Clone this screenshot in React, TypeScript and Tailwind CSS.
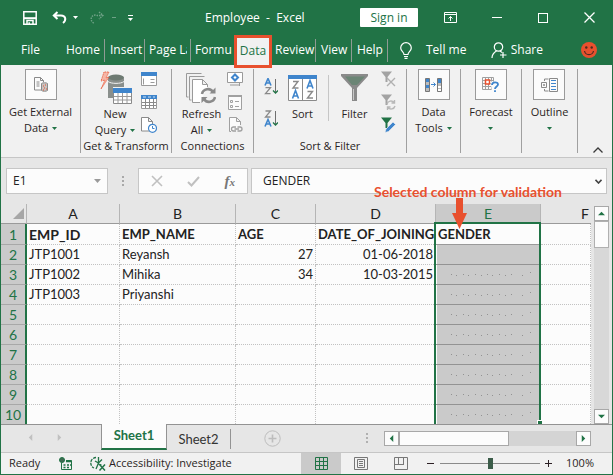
import type { ReactNode } from 'react';

const gridFont = "font-['Lato','Liberation_Sans',sans-serif]";

function Caret({ className = '' }: { className?: string }) {
  return (
    <svg viewBox="0 0 5 3" className={`inline-block h-[3px] w-[5px] ${className}`} aria-hidden="true">
      <path d="M0 0h5L2.5 3z" fill="currentColor" />
    </svg>
  );
}

/* ---------- title bar ---------- */

function TitleBar() {
  return (
    <header className="flex h-[35px] items-center text-white">
      <button aria-label="Save" className="ml-[21px]">
        <svg viewBox="0 0 16 16" className="size-4" fill="none" stroke="currentColor" strokeWidth="1.5">
          <path d="M1.8 1.8h12.4v12.4H1.8z" />
          <path d="M2 8.2h12" strokeWidth="2" />
          <path d="M5 14v-3.5h6V14M7.2 12.3v1.7" />
        </svg>
      </button>
      <button aria-label="Undo" className="ml-3.5 flex items-center gap-1.5">
        <svg viewBox="0 0 15 13" className="h-[13px] w-[15px]" fill="none" stroke="currentColor" strokeWidth="2">
          <path d="M5.500 1 1.800 4.500l3.700 3.500M2 4.500h7c5 0 5.500 5 2 7.500" />
        </svg>
        <Caret />
      </button>
      <button aria-label="Redo" disabled className="ml-3 flex items-center gap-2 text-[#6fa287]">
        <svg viewBox="0 0 14 13" className="h-[13px] w-3.5" fill="none" stroke="currentColor" strokeWidth="1.4" strokeDasharray="1.5 1">
          <path d="M9 1l4 3.5L9 8M13 4.500H7a4 4 0 0 0-5 6l2 2" />
        </svg>
        <span className="h-px w-1 bg-current" />
      </button>
      <button aria-label="Customize quick access" className="ml-3 flex flex-col items-center gap-[2px]">
        <span className="h-px w-[5px] bg-white" />
        <Caret />
      </button>
      <h1 className="ml-[72px] whitespace-pre text-[12px]">Employee  -  Excel</h1>
      <button className="ml-auto h-[19px] w-[58px] rounded-[1px] bg-white text-[12px] leading-[18px] text-[#217346]">Sign in</button>
      <button aria-label="Ribbon display options" className="ml-[26px]">
        <svg viewBox="0 0 13 11" className="h-[11px] w-[13px]" fill="none" stroke="currentColor">
          <path d="M.5.5h12v10H.5zM.5 2.500h12M6.500 9V4.500M4.500 6.500l2-2 2 2" />
        </svg>
      </button>
      <button aria-label="Minimize" className="ml-[35px] flex h-4 w-2.5 items-center">
        <span className="h-px w-full bg-white" />
      </button>
      <button aria-label="Maximize" className="ml-9 size-2.5 border border-white" />
      <button aria-label="Close" className="mr-[17px] ml-9">
        <svg viewBox="0 0 11 11" className="size-[11px]" stroke="currentColor" strokeWidth="1.3">
          <path d="M.5.5l10 10M10.500.5l-10 10" />
        </svg>
      </button>
    </header>
  );
}

/* ---------- ribbon tabs ---------- */

function Tab({ label, width, line = true }: { label: string; width: string; line?: boolean }) {
  return (
    <button className={`h-[23px] shrink-0 pl-[5px] text-left whitespace-nowrap ${width} ${line ? 'border-r border-[#8f9b94]' : ''}`}>
      {label}
    </button>
  );
}

function RibbonTabs() {
  return (
    <nav className="flex h-[30px] items-center text-[12px] text-white">
      <button className="ml-[20px] w-10 text-left">File</button>
      <Tab label="Home" width="w-[44px]" />
      <Tab label="Insert" width="w-[40px]" />
      <div className="flex w-[46px] border-r border-[#8f9b94]">
        <button className="ml-1 h-[23px] w-[38px] overflow-hidden text-left whitespace-nowrap">Page La</button>
      </div>
      <button className="h-[23px] w-[43px] shrink-0 pl-1 text-left">Formu</button>
      <button className="z-10 h-[33px] w-[38px] shrink-0 translate-y-px border-[3px] border-[#e8502e] bg-[#f1f1f1] text-[#217346]">Data</button>
      <div className="-ml-[2px] flex">
        <Tab label="Review" width="w-[46px]" />
        <Tab label="View" width="w-[36px]" />
        <Tab label="Help" width="w-[36px]" />
      </div>
      <button className="ml-3 flex items-center gap-3.5">
        <svg viewBox="0 0 12 17" className="h-[17px] w-3" fill="none" stroke="currentColor" strokeWidth="1.2">
          <path d="M4 12.500c0-2.500-3.300-3.300-3.300-6.500a5.300 5.300 0 0 1 10.600 0c0 3.200-3.300 4-3.300 6.500zM4 14.500h4M4.500 16.400h3" />
        </svg>
        Tell me
      </button>
      <button className="ml-auto flex items-center gap-1">
        <svg viewBox="0 0 16 17" className="h-[17px] w-4" fill="none" stroke="currentColor" strokeWidth="1.2">
          <circle cx="7.500" cy="5" r="4.200" />
          <path d="M1 16c0-3.500 2-5.500 4.500-7M9 9l2 1.500M12 10v6M9 13h6.500" />
        </svg>
        Share
      </button>
      <button aria-label="Feedback" className="mr-[15px] ml-[38px]">
        <svg viewBox="0 0 16 16" className="size-4">
          <circle cx="8" cy="8" r="8" fill="#e8502e" />
          <circle cx="5.300" cy="5.500" r="1.200" fill="#4b2a20" />
          <circle cx="10.700" cy="5.500" r="1.200" fill="#4b2a20" />
          <path d="M3.500 9a4.600 4.600 0 0 0 9 0" fill="none" stroke="#4b2a20" strokeWidth="1.200" />
        </svg>
      </button>
    </nav>
  );
}

/* ---------- ribbon ---------- */

function Group({ width, label, children }: { width: string; label?: string; children: ReactNode }) {
  return (
    <section className={`flex h-[84px] shrink-0 flex-col border-r border-[#a0a0a0] ${width}`}>
      <div className="flex flex-1 justify-center">{children}</div>
      {label && <h2 className="text-center text-[11px] leading-[14px] whitespace-nowrap">{label}</h2>}
    </section>
  );
}

function BoxedCommand({ lines, icon }: { lines: [string, string]; icon: ReactNode }) {
  return (
    <button className="flex flex-col items-center text-[11px] leading-4 whitespace-nowrap">
      <span className="mb-1 flex h-[31px] w-8 items-center justify-center border border-[#9a9a9a] bg-[#fbfbfb]">{icon}</span>
      <span>{lines[0]}</span>
      <span className="flex h-4 items-center gap-1">
        {lines[1]}
        <Caret className="text-[#217346]" />
      </span>
    </button>
  );
}

function TallCommand({ lines, icon, caret }: { lines: string[]; icon: ReactNode; caret?: boolean }) {
  return (
    <button className="flex flex-col items-center text-[11px] leading-4 whitespace-nowrap">
      <span className="flex h-[37px] items-center">{icon}</span>
      <span>{lines[0]}</span>
      <span className="flex items-center gap-1">
        {lines[1]}
        {caret && <Caret className="text-[#217346]" />}
      </span>
    </button>
  );
}

function ExternalDataIcon() {
  return (
    <svg viewBox="0 0 14 15" className="h-[15px] w-3.5" fill="none" stroke="#8a8a8a">
      <path d="M7 13H.5V.5h6l3 3V5M6.500.5v3h3M2.500 5h3M2.500 7h3M2.500 9h3" />
      <path d="M7.500 6.500v7c1 1 5 1 6 0v-7c-1-1-5-1-6 0z" fill="#c9c3c0" />
      <path d="M9 9h1M11 8h1M10 11h1M12 12h1M9 13h1" stroke="#e8502e" />
    </svg>
  );
}

function NewQueryIcon() {
  return (
    <svg viewBox="0 0 33 33" className="size-[33px]">
      <path d="M9 8c0-5 16-5 16 0v8H14v11H9z" fill="#8a8f8c" />
      <ellipse cx="17" cy="6.500" rx="8" ry="3" fill="#6d7a72" />
      <path d="M9 10.500c3 2.500 13 2.500 16 0" stroke="#f1f1f1" fill="none" />
      <path d="M5 1 2 10l4-1-4 9 8-12-3 1 3-6z" fill="#f6b5a6" stroke="#e8502e" strokeWidth=".8" strokeDasharray="1.5 .8" />
      <path d="M14.500 17.500h18v15h-18z" fill="#fff" stroke="#8a8a8a" />
      <path d="M14 17h19v5H14z" fill="#3f85cc" />
      <path d="M15 25.500h17M15 29h17M19 22v10M23.500 22v10M28 22v10" stroke="#9a9a9a" />
    </svg>
  );
}

function TableIcon({ dense = false }: { dense?: boolean }) {
  return (
    <svg viewBox="0 0 16 16" className="size-4">
      <path d="M.5 1.500h15v13H.5z" fill="#fff" stroke="#9a9a9a" />
      <path d="M0 1h16v4H0z" fill="#3f85cc" />
      {dense ? (
        <path d="M1 8.500h14M1 11.500h14M4.500 5v9M8.500 5v9M12.500 5v9" stroke="#8a8a8a" />
      ) : (
        <path d="M9.500 8.500h4M9.500 11.500h4M2.500 7.500v6" stroke="#9a9a9a" />
      )}
      {dense && <path d="M2 3h3M7 3h3M12 3h2" stroke="#cfe2f5" />}
    </svg>
  );
}

function RecentIcon() {
  return (
    <svg viewBox="0 0 16 16" className="size-4" fill="#fff">
      <path d="M9.500 14H.5V.5h7l4 4V7M7.500.5v4h4" stroke="#8a8a8a" />
      <circle cx="11.500" cy="11.300" r="4" stroke="#3f85cc" strokeWidth="1.200" />
      <path d="M11.500 9v2.500h2" stroke="#3f85cc" fill="none" />
    </svg>
  );
}

function RefreshIcon() {
  return (
    <svg viewBox="0 0 30 32" className="h-8 w-[30px]" fill="none" stroke="#9a9a9a">
      <path d="M2.500 25H.5V1.500h15M5.500 28h-2V4.500h15" />
      <path d="M14 30.500H6.500v-23h10l5 5V15M16.500 7.500v5h5" fill="#fff" />
      <path d="M16 22a6 6 0 0 1 11-2M29 25a6 6 0 0 1-11 2" strokeWidth="2.600" stroke="#8a8a8a" />
      <path d="M29.500 15.500v6h-6zM15.500 31v-6h6z" fill="#8a8a8a" stroke="none" />
    </svg>
  );
}

function ConnectionsIcon() {
  return (
    <svg viewBox="0 0 16 16" className="size-4" fill="none" stroke="#9a9a9a">
      <path d="M.5 1.500h15v10H.5zM3 14h10M12.500 12v3" fill="#fff" />
      <path d="M8 3.500 11 6.500l-3 3-3-3z" stroke="#3f85cc" strokeWidth="2" />
    </svg>
  );
}

function PropertiesIcon() {
  return (
    <svg viewBox="0 0 16 16" className="size-4" fill="none" stroke="#a0a0a0">
      <path d="M1.500 1.500h13v14h-13z" fill="#fbfbfb" />
      <path d="M1 2h14" strokeWidth="2" />
      <path d="M3.500 6.500h2v2h-2zM3.500 11.500h2v2h-2zM8 7.500h4M8 12.500h4" />
    </svg>
  );
}

function LinksIcon() {
  return (
    <svg viewBox="0 0 16 16" className="size-4" fill="none" stroke="#a0a0a0">
      <path d="M4 14.500H2.500V.5h7l4 4V8M9.500.5v4h4" fill="#fbfbfb" />
      <path d="M9 10H6.500a2 2 0 0 0 0 4H9M10.500 10H13a2 2 0 0 1 0 4h-2.500M7.500 12h4.500" strokeWidth="1.300" />
    </svg>
  );
}

function SortArrowIcon({ descending = false }: { descending?: boolean }) {
  const top = 'M1 7.500 4 .5l3 7M2 5h4';
  return (
    <svg viewBox="0 0 14 17" className="h-[17px] w-3.5" fill="none" strokeWidth="1.300">
      {descending ? (
        <>
          <path d="M1.500 1h5l-5 6h5" stroke="#8a8a8a" />
          <path d={top} transform="translate(0 9)" stroke="#3f85cc" strokeWidth="1.600" />
        </>
      ) : (
        <>
          <path d={top} stroke="#3f85cc" strokeWidth="1.600" />
          <path d="M1.500 9.700h5l-5 6h5" stroke="#8a8a8a" />
        </>
      )}
      <path d="M11.500 1v14" stroke="#6f6f6f" strokeWidth="1" />
      <path d="M9 12.500l2.500 2.500 2.500-2.500" stroke="#217346" />
    </svg>
  );
}

function SortIcon() {
  return (
    <svg viewBox="0 0 29 26" className="h-[26px] w-[29px]" fill="none">
      <path d="M.5.5h28v25H.5z" fill="#fff" stroke="#8a8a8a" />
      <path d="M0 0h29v4H0z" fill="#3f85cc" />
      <path d="M14.500 4v21" stroke="#8a8a8a" />
      <path d="M5 6.500h5l-5 6.500h5.500M19.500 16.500h5l-5 6.500H25" stroke="#8a8a8a" strokeWidth="1.400" />
      <path d="M4.500 23.500 7.500 15.500l3 8M5.500 21h4M19 13.500 22 5.500l3 8M20 11h4" stroke="#3f85cc" strokeWidth="1.600" />
    </svg>
  );
}

function FilterIcon() {
  return (
    <svg viewBox="0 0 27 28" className="h-7 w-[27px]">
      <path d="M0 0h27v2L16 14v13h-5V14L0 2z" fill="#8a8a8a" />
      <path d="M4 2.500h20l-8 8.500h-5z" fill="#6b8575" />
      <path d="M12.500 15v11" stroke="#c9c9c9" />
    </svg>
  );
}

function SmallFilter({ kind }: { kind: 'clear' | 'reapply' | 'advanced' }) {
  const color = kind === 'advanced' ? '#217346' : '#a3a3a3';
  return (
    <svg viewBox="0 0 16 16" className="size-4" fill="none">
      <path d="M1 .5h11L7.500 6v5h-2V6z" fill={color} />
      {kind === 'clear' && <path d="M7 7l8 8M15 7l-8 8" stroke="#b0b0b0" strokeWidth="1.400" />}
      {kind === 'reapply' && (
        <path d="M7 10a4 4 0 0 1 7-1.500M15 12a4 4 0 0 1-7 1.500M14.500 6v3h-3M7.500 16v-3h3" stroke="#b8b8b8" strokeWidth="1.400" />
      )}
      {kind === 'advanced' && <path d="M5 15.500l1-3.500 7-7 2.500 2.500-7 7z" fill="#3f85cc" stroke="#f1f1f1" strokeWidth=".6" />}
    </svg>
  );
}

function DataToolsIcon() {
  return (
    <svg viewBox="0 0 17 14" className="h-3.5 w-[17px]">
      <path d="M.5.5h4v13h-4zM12.500.5h4v13h-4z" fill="#bcbcbc" stroke="#777" />
      <path d="M1 1h3v3H1zM1 7h3v3H1zM13 1h3v4h-3z" fill="#3f85cc" />
      <path d="M13 8h3v2h-3zM13 11h3v2h-3z" fill="#fff" />
      <path d="M6 6.500h4.500M8.500 4.500l2 2-2 2" stroke="#3f85cc" fill="none" />
    </svg>
  );
}

function ForecastIcon() {
  return (
    <svg viewBox="0 0 17 15" className="h-[15px] w-[17px]" fill="none">
      <path d="M.5.5h11v12H.5zM3.500 0v13M6.500 0v13M9.500 0v13M0 3.500h12M0 6.500h12M0 9.500h12" stroke="#a0a0a0" />
      <path d="M3.500 3h4v4h-4z" fill="#fff" stroke="#e8502e" strokeWidth="1.500" />
      <path d="M8.500 4.500H17V15H10z" fill="#fbfbfb" />
      <path d="M10 8c0-3.500 6-3.500 6-.5 0 2-3 2-3 4.500M13 13.200v1.800" stroke="#3f85cc" strokeWidth="1.800" />
    </svg>
  );
}

function OutlineIcon() {
  return (
    <svg viewBox="0 0 17 14" className="h-3.5 w-[17px]" fill="none" stroke="#8a8a8a">
      <path d="M8.500.5h8v13h-8z" />
      <path d="M10 2.500h5M10 5.500h5M10 8.500h5M10 11.500h5" stroke="#3f85cc" />
      <path d="M.5 4.500h5v5h-5zM2 7h2M3 6v2M3.500 1h4M3.500 13h4M3.500 1v2M3.500 11v2" />
    </svg>
  );
}

function IconStack({ items }: { items: [string, ReactNode][] }) {
  return (
    <div className="flex flex-col gap-[7px] pt-[2px]">
      {items.map(([label, icon]) => (
        <button key={label} aria-label={label}>{icon}</button>
      ))}
    </div>
  );
}

function Ribbon() {
  return (
    <div className="flex h-[93px] items-start border-b border-[#c6c6c6] bg-[#f1f1f1] pt-[4px] text-[#2b1f24]">
      <Group width="w-[80px]">
        <BoxedCommand lines={['Get External', 'Data']} icon={<ExternalDataIcon />} />
      </Group>
      <Group width="w-[91px]" label="Get & Transform">
        <div className="flex gap-1.5">
          <TallCommand lines={['New', 'Query']} icon={<NewQueryIcon />} caret />
          <IconStack
            items={[
              ['Show queries', <TableIcon />],
              ['From table', <TableIcon dense />],
              ['Recent sources', <RecentIcon />],
            ]}
          />
        </div>
      </Group>
      <Group width="w-[82px]" label="Connections">
        <div className="flex gap-1.5">
          <TallCommand lines={['Refresh', 'All']} icon={<RefreshIcon />} caret />
          <IconStack
            items={[
              ['Connections', <ConnectionsIcon />],
              ['Properties', <PropertiesIcon />],
              ['Edit links', <LinksIcon />],
            ]}
          />
        </div>
      </Group>
      <Group width="w-[153px]" label="Sort & Filter">
        <div className="flex">
          <div className="flex flex-col gap-[15px] pt-[9px]">
            <button aria-label="Sort A to Z"><SortArrowIcon /></button>
            <button aria-label="Sort Z to A"><SortArrowIcon descending /></button>
          </div>
          <div className="ml-[10px]">
            <TallCommand lines={['Sort']} icon={<SortIcon />} />
          </div>
          <span className="mt-1.5 ml-[11px] h-[46px] w-px bg-[#c6c6c6]" />
          <div className="mr-[12px] ml-[12px]">
            <TallCommand lines={['Filter']} icon={<FilterIcon />} />
          </div>
          <IconStack
            items={[
              ['Clear filter', <SmallFilter kind="clear" />],
              ['Reapply filter', <SmallFilter kind="reapply" />],
              ['Advanced filter', <SmallFilter kind="advanced" />],
            ]}
          />
        </div>
      </Group>
      <Group width="w-[54px]">
        <BoxedCommand lines={['Data', 'Tools']} icon={<DataToolsIcon />} />
      </Group>
      <Group width="w-[61px]">
        <BoxedCommand lines={['Forecast', '']} icon={<ForecastIcon />} />
      </Group>
      <Group width="w-[56px]">
        <BoxedCommand lines={['Outline', '']} icon={<OutlineIcon />} />
      </Group>
      <button aria-label="Collapse ribbon" className="mr-[9px] mb-1 ml-auto self-end">
        <svg viewBox="0 0 10 6" className="h-1.5 w-2.5" fill="none" stroke="#3a3a3a" strokeWidth="1.300">
          <path d="M.5 5.500 5 1l4.500 4.500" />
        </svg>
      </button>
    </div>
  );
}

/* ---------- formula bar ---------- */

function FormulaBar() {
  return (
    <div className="flex h-[46px] items-center px-[5px] text-[#222]">
      <div className="flex h-[26px] w-[102px] items-center border border-[#c6c6c6] bg-[#fcfcfc] pr-1.5">
        <input aria-label="Name box" defaultValue="E1" className="w-full min-w-0 pl-1.5 text-[12px] outline-none" />
        <button aria-label="Names"><svg viewBox="0 0 7 4" className="h-1 w-[7px]"><path d="M0 0h7L3.500 4z" fill="#9a9a9a" /></svg></button>
      </div>
      <span className="mx-3.5 flex w-[2px] flex-col gap-[2px]">
        <i className="size-[2px] bg-[#a8a8a8]" />
        <i className="size-[2px] bg-[#a8a8a8]" />
        <i className="size-[2px] bg-[#a8a8a8]" />
      </span>
      <div className="flex h-[26px] w-[110px] shrink-0 items-center justify-between border border-[#c6c6c6] bg-[#fcfcfc] pr-3 pl-3">
        <button aria-label="Cancel">
          <svg viewBox="0 0 12 12" className="size-3" stroke="#c0c0c0" strokeWidth="1.600"><path d="M1 1l10 10M11 1 1 11" /></svg>
        </button>
        <button aria-label="Enter">
          <svg viewBox="0 0 13 11" className="h-[11px] w-[13px]" fill="none" stroke="#c0c0c0" strokeWidth="2"><path d="M1 6l3.500 3.500L12 1" /></svg>
        </button>
        <button aria-label="Insert function" className="font-['Liberation_Serif',serif] text-[15px] leading-5 font-bold text-[#777] italic">
          f<span className="text-[11px]">x</span>
        </button>
      </div>
      <div className="ml-[3px] flex h-[26px] min-w-0 flex-1 items-center border border-[#c6c6c6] bg-[#fcfcfc] pr-1">
        <input aria-label="Formula" defaultValue="GENDER" className="min-w-0 flex-1 pl-[11px] text-[12px] outline-none" />
        <button aria-label="Expand formula bar">
          <svg viewBox="0 0 7 5" className="h-[5px] w-[7px]" fill="none" stroke="#444" strokeWidth="1.600"><path d="M.5.8 3.500 4l3-3.200" /></svg>
        </button>
      </div>
    </div>
  );
}

/* ---------- sheet ---------- */

const rows: string[][] = [
  ['EMP_ID', 'EMP_NAME', 'AGE', 'DATE_OF_JOINING', 'GENDER'],
  ['JTP1001', 'Reyansh', '27', '01-06-2018', ''],
  ['JTP1002', 'Mihika', '34', '10-03-2015', ''],
  ['JTP1003', 'Priyanshi', '', '', ''],
  ...Array.from({ length: 6 }, () => ['', '', '', '', '']),
];

const dotColumns = [15, 20, 27, 32, 39, 45, 51, 56, 63, 69, 75, 86, 94];

function SelectedFill({ dots }: { dots: boolean }) {
  return (
    <svg className="block h-[19px] w-full" aria-hidden="true">
      {dots && dotColumns.map((x, i) => <rect key={x} x={x} y={i === 12 ? 7 : i % 2 ? 10 : 9} width="1" height="1" fill="#929292" />)}
    </svg>
  );
}

function Annotation() {
  return (
    <>
      <span className="absolute -top-[21px] -left-[62px] z-20 text-[14px] leading-[18px] font-bold whitespace-nowrap text-[#e8502e]">
        Selected column for validation
      </span>
      <svg viewBox="0 0 15 31" className="absolute -top-1.5 left-4 z-20 h-[31px] w-[15px]" aria-hidden="true">
        <path d="M4 0h7v15h4L7.500 31 0 15h4z" fill="#e8502e" />
      </svg>
    </>
  );
}

function Sheet() {
  const line = 'border-r border-dotted border-[#c2c2c2]';
  const head = 'border-r border-b border-r-[#b5b5b5] border-b-[#9a9a9a] p-0 font-normal';
  return (
    <table className={`w-full table-fixed border-separate border-spacing-0 text-[#222] ${gridFont}`}>
      <colgroup>
        <col className="w-[26px]" />
        <col className="w-[93px]" />
        <col className="w-[116px]" />
        <col className="w-[80px]" />
        <col className="w-[120px]" />
        <col className="w-[105px]" />
        <col />
      </colgroup>
      <thead>
        <tr className="h-5 text-[14px] leading-[19px]">
          <th className={head} aria-label="Select all">
            <svg viewBox="0 0 11 11" className="mr-[2px] ml-auto size-[11px]"><path d="M11 0v11H0z" fill="#a6a6a6" /></svg>
          </th>
          {['A', 'B', 'C', 'D'].map((c) => (
            <th key={c} scope="col" className={head}>{c}</th>
          ))}
          <th scope="col" className={`relative bg-[#cacaca] text-[#217346] ${head}`}>E<Annotation /></th>
          <th scope="col" className="border-b border-b-[#9a9a9a] p-0 pr-[2px] text-right font-normal">F</th>
        </tr>
      </thead>
      <tbody className="text-[13px] leading-[19px]">
        {rows.map((row, r) => {
          const last = r === rows.length - 1;
          const bottom = last ? '' : 'border-b';
          return (
            <tr key={r} className={r === 0 ? 'h-[21px] font-bold' : last ? 'h-[19px]' : 'h-5'}>
              <th scope="row" className={`border-r-2 border-r-[#217346] border-b-[#a8a8a8] bg-[#cacaca] p-0 text-center text-[14px] font-normal text-[#217346] ${bottom}`}>
                {r + 1}
              </th>
              {row.slice(0, 4).map((cell, c) => (
                <td
                  key={c}
                  className={`bg-[#fcfcfc] p-0 whitespace-nowrap ${line} ${bottom} ${c > 1 && r > 0 ? 'pr-[2px] text-right' : 'pl-[2px]'} ${r === 0 && c === 0 ? 'text-[14px]' : ''}`}
                >
                  {cell}
                </td>
              ))}
              {r === 0 ? (
                <td className="relative border-b border-[#9a9a9a] bg-[#fcfcfc] p-0 pl-[2px]">
                  {row[4]}
                  <span className="absolute -top-0.5 -left-[2px] h-[202px] w-[107px] border-x-2 border-t-2 border-[#217346]" />
                  <span className="absolute top-[196px] -right-px h-1 w-[5px] border-t border-l border-white bg-[#217346]" />
                </td>
              ) : (
                <td className={`border-[#939393] bg-[#cacaca] p-0 shadow-[inset_1px_0_#fcfcfc,inset_-2px_0_#fcfcfc] ${bottom}`}>
                  <SelectedFill dots={r > 1} />
                </td>
              )}
              <td className={`border-r border-dotted border-[#c2c2c2] bg-[#fcfcfc] p-0 ${bottom}`} />
            </tr>
          );
        })}
      </tbody>
    </table>
  );
}

function Arrow({ dir }: { dir: 'up' | 'down' | 'left' | 'right' }) {
  const paths = { up: 'M0 6l4-4 4 4z', down: 'M0 2h8L4 6z', left: 'M6 0v8L2 4z', right: 'M2 0v8l4-4z' };
  return <svg viewBox="0 0 8 8" className="size-[7px]"><path d={paths[dir]} fill="currentColor" /></svg>;
}

const scrollButton = 'flex size-[15px] shrink-0 items-center justify-center border border-[#a8a8a8] bg-[#fcfcfc] text-[#217346]';

function VerticalScroll() {
  return (
    <div className="mt-[2px] mr-[3px] ml-[3px] flex w-[15px] shrink-0 flex-col bg-[#d8d8d8]">
      <button aria-label="Scroll up" className={scrollButton}><Arrow dir="up" /></button>
      <div className="h-[27px] border border-[#b0b0b0] bg-[#fcfcfc]" />
      <button aria-label="Scroll down" className={`mt-auto ${scrollButton}`}><Arrow dir="down" /></button>
    </div>
  );
}

function SheetTabs() {
  return (
    <div className={`flex h-7 items-start border-t border-[#939393] ${gridFont}`}>
      <button aria-label="Previous sheet" className="mt-[9px] ml-[26px] text-[#c0c0c0]"><Arrow dir="left" /></button>
      <button aria-label="Next sheet" className="mt-[9px] ml-[22px] text-[#c0c0c0]"><Arrow dir="right" /></button>
      <button className="-mt-px ml-[38px] h-[26px] w-[66px] border-x border-b-2 border-x-[#939393] border-b-[#217346] bg-[#fcfcfc] text-[13px] font-bold text-[#217346]">
        Sheet1
      </button>
      <button className="mt-1 h-5 w-[64px] border-r border-[#939393] text-[13px] leading-[18px] text-[#333]">Sheet2</button>
      <button aria-label="New sheet" className="mt-[5px] ml-[33px]">
        <svg viewBox="0 0 17 17" className="size-[17px]" fill="none" stroke="#bdbdbd">
          <circle cx="8.500" cy="8.500" r="7.700" />
          <path d="M8.500 4.500v8M4.500 8.500h8" strokeWidth="1.600" />
        </svg>
      </button>
      <span className="mt-2 mr-[16px] ml-auto flex flex-col gap-[2px]">
        <i className="size-[2px] bg-[#b0b0b0]" />
        <i className="size-[2px] bg-[#b0b0b0]" />
        <i className="size-[2px] bg-[#b0b0b0]" />
      </span>
      <div className="mt-1.5 mr-[21px] flex w-[207px] bg-[#d4d4d4]">
        <button aria-label="Scroll left" className={scrollButton}><Arrow dir="left" /></button>
        <div className="h-[15px] w-[110px] border border-[#a8a8a8] bg-[#fcfcfc]" />
        <button aria-label="Scroll right" className={`ml-auto ${scrollButton}`}><Arrow dir="right" /></button>
      </div>
    </div>
  );
}

/* ---------- status bar ---------- */

function StatusBar() {
  return (
    <footer className="flex h-[22px] items-center border-t border-[#c6c6c6] bg-[#f1f1f1] text-[11px] text-[#2b1f24]">
      <span className="ml-2 w-[50px]">Ready</span>
      <button aria-label="Record macro">
        <svg viewBox="0 0 14 14" className="size-3.5" fill="none" stroke="#217346">
          <path d="M2.500 6v6.500h10v-9H7" />
          <path d="M7 4.500h6M4.500 8h2M8 8h2M4.500 10.500h2M8 10.500h2M11 8h1" strokeWidth="1.400" />
          <circle cx="3" cy="3" r="2.500" fill="#3f6b52" />
        </svg>
      </button>
      <button className="ml-[17px] flex items-center gap-[3px] whitespace-nowrap">
        <svg viewBox="0 0 16 15" className="h-[15px] w-4" fill="none" stroke="#217346" strokeWidth="1.300">
          <path d="M6 1.500A5.500 5.500 0 0 0 4 12" strokeDasharray="3 1" />
          <path d="M8.500 1v6M5 5l3.500 2L12 3.500M8.500 7 6 13M8.500 8l3 1" />
          <path d="M9.500 8.500l5.500 6M15 8.500l-5.500 6" strokeWidth="1.500" />
        </svg>
        Accessibility: Investigate
      </button>
      <button aria-label="Normal view" className="ml-auto flex h-full w-10 items-center justify-center bg-[#cacaca]">
        <svg viewBox="0 0 13 13" className="size-[13px]" fill="none" stroke="#217346">
          <path d="M.5.5h12v12H.5zM4.500 0v13M8.500 0v13M0 4.500h13M0 8.500h13" />
        </svg>
      </button>
      <button aria-label="Page layout view" className="ml-[13px]">
        <svg viewBox="0 0 14 13" className="h-[13px] w-3.5" fill="none" stroke="#777">
          <path d="M.5.5h13v12H.5zM3.500 2.500h7v8h-7zM5 4.500h4M5 6.500h4M5 8.500h4" />
        </svg>
      </button>
      <button aria-label="Page break view" className="ml-[26px]">
        <svg viewBox="0 0 14 13" className="h-[13px] w-3.5" fill="none" stroke="#777">
          <path d="M.5.5h13v12H.5zM4.500 0v7.500M9.500 0v7.500M0 7.500h10" />
        </svg>
      </button>
      <button aria-label="Zoom out" className="ml-[19px] flex h-3 w-[7px] items-center"><span className="h-px w-full bg-[#2b1f24]" /></button>
      <input
        type="range"
        aria-label="Zoom"
        min={0}
        max={100}
        defaultValue={50}
        className="ml-1.5 h-3 w-[100px] appearance-none bg-transparent [&::-webkit-slider-runnable-track]:h-px [&::-webkit-slider-runnable-track]:bg-[#8a8a8a] [&::-webkit-slider-thumb]:-mt-[5px] [&::-webkit-slider-thumb]:h-[11px] [&::-webkit-slider-thumb]:w-[5px] [&::-webkit-slider-thumb]:appearance-none [&::-webkit-slider-thumb]:bg-[#3b5c49]"
      />
      <button aria-label="Zoom in" className="ml-[5px]">
        <svg viewBox="0 0 7 7" className="size-[7px]" stroke="#2b1f24"><path d="M3.500 0v7M0 3.500h7" /></svg>
      </button>
      <span className="mr-[18px] ml-3.5 w-[28px] text-right">100%</span>
    </footer>
  );
}

export default function App() {
  return (
    <main className="flex flex-col border border-t-0 border-[#217346] bg-[#e6e6e6] font-['Open_Sans','Noto_Sans',sans-serif]">
      <div className="bg-[#217346]">
        <TitleBar />
        <RibbonTabs />
      </div>
      <Ribbon />
      <FormulaBar />
      <div className="flex">
        <div className="min-w-0 flex-1">
          <Sheet />
        </div>
        <VerticalScroll />
      </div>
      <SheetTabs />
      <StatusBar />
    </main>
  );
}
